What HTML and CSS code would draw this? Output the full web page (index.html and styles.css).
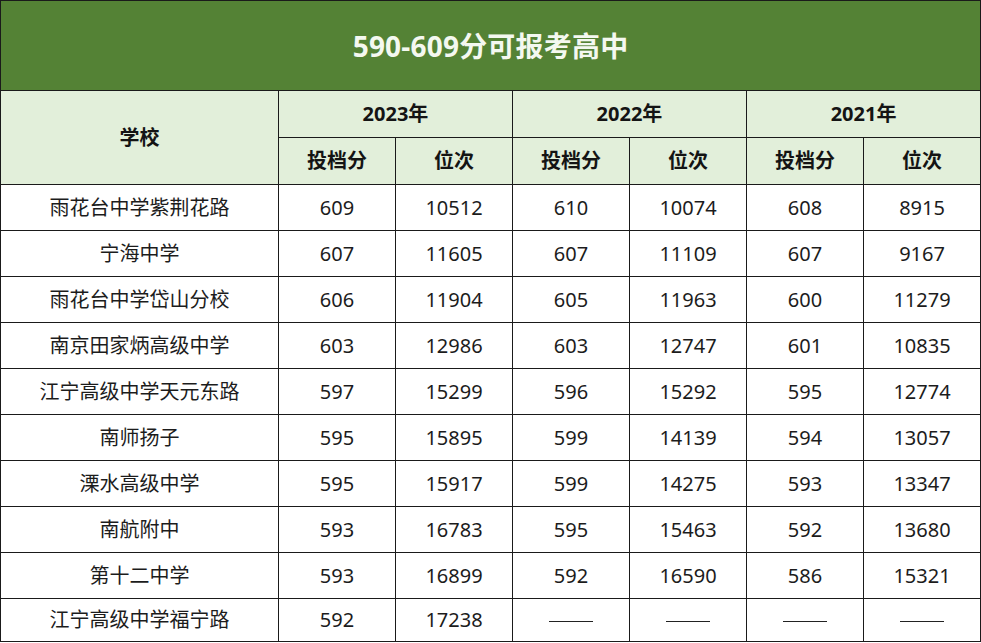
FILE: index.html
```html
<!DOCTYPE html>
<html lang="zh-CN">
<head>
<meta charset="utf-8">
<link rel="stylesheet" href="styles.css">
</head>
<body>
<table class="score-table">
  <colgroup>
    <col class="c-name">
    <col class="c-num"><col class="c-num">
    <col class="c-num"><col class="c-num">
    <col class="c-num"><col class="c-num">
  </colgroup>
  <thead>
    <tr class="title-row"><th colspan="7">590-609分可报考高中</th></tr>
    <tr class="head-row">
      <th rowspan="2">学校</th>
      <th colspan="2">2023年</th>
      <th colspan="2">2022年</th>
      <th colspan="2">2021年</th>
    </tr>
    <tr class="head-row">
      <th>投档分</th><th>位次</th>
      <th>投档分</th><th>位次</th>
      <th>投档分</th><th>位次</th>
    </tr>
  </thead>
  <tbody>
    <tr><td>雨花台中学紫荆花路</td><td>609</td><td>10512</td><td>610</td><td>10074</td><td>608</td><td>8915</td></tr>
    <tr><td>宁海中学</td><td>607</td><td>11605</td><td>607</td><td>11109</td><td>607</td><td>9167</td></tr>
    <tr><td>雨花台中学岱山分校</td><td>606</td><td>11904</td><td>605</td><td>11963</td><td>600</td><td>11279</td></tr>
    <tr><td>南京田家炳高级中学</td><td>603</td><td>12986</td><td>603</td><td>12747</td><td>601</td><td>10835</td></tr>
    <tr><td>江宁高级中学天元东路</td><td>597</td><td>15299</td><td>596</td><td>15292</td><td>595</td><td>12774</td></tr>
    <tr><td>南师扬子</td><td>595</td><td>15895</td><td>599</td><td>14139</td><td>594</td><td>13057</td></tr>
    <tr><td>溧水高级中学</td><td>595</td><td>15917</td><td>599</td><td>14275</td><td>593</td><td>13347</td></tr>
    <tr><td>南航附中</td><td>593</td><td>16783</td><td>595</td><td>15463</td><td>592</td><td>13680</td></tr>
    <tr><td>第十二中学</td><td>593</td><td>16899</td><td>592</td><td>16590</td><td>586</td><td>15321</td></tr>
    <tr class="last-row"><td>江宁高级中学福宁路</td><td>592</td><td>17238</td><td><span class="dash"></span></td><td><span class="dash"></span></td><td><span class="dash"></span></td><td><span class="dash"></span></td></tr>
  </tbody>
</table>
</body>
</html>
```

FILE: styles.css
```css
html, body {
  margin: 0;
  padding: 0;
  background: #ffffff;
  overflow: hidden;
}

.score-table {
  width: 981px;
  table-layout: fixed;
  border-collapse: collapse;
  font-family: "Noto Sans", "Noto Sans CJK SC", sans-serif;
  color: #111111;
}

.c-name { width: 278px; }
.c-num { width: 117px; }

.score-table th,
.score-table td {
  border: 1px solid #1a1a1a;
  text-align: center;
  vertical-align: middle;
  padding: 0;
  font-size: 20px;
  line-height: 24px;
}

.title-row th {
  height: 89px;
  background: #548235;
  color: #f4f8f0;
  font-size: 28px;
  font-weight: 700;
  letter-spacing: 0.2px;
}

.head-row th {
  height: 46px;
  background: #e2efda;
  font-weight: 700;
  color: #141414;
}

.score-table td {
  height: 45px;
  font-weight: 400;
  color: #1c1c1c;
}

.last-row td {
  height: 42px;
}

.dash {
  display: inline-block;
  width: 44px;
  height: 1px;
  background: #222222;
  vertical-align: middle;
}
```
